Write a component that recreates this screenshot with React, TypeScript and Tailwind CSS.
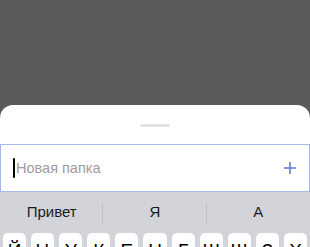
const keys = ["Й", "Ц", "У", "К", "Е", "Н", "Г", "Ш", "Щ", "З", "Х"];
const suggestions = ["Привет", "Я", "А"];

export default function App() {
  return (
    <div className="w-[310px] h-[247px] overflow-hidden bg-[#5b5b5b] flex flex-col font-['Liberation_Sans',Arial,sans-serif]">
      <div className="h-[105px] shrink-0" />
      <div className="flex-1 flex flex-col bg-white rounded-t-[13px]">
        {/* grabber */}
        <div className="flex justify-center pt-[19px] pb-[17px]">
          <div className="w-[30px] h-[3px] rounded-full bg-[#e3e3e6]" />
        </div>

        {/* input */}
        <div className="h-[48px] shrink-0 flex items-center border border-[#a9b7e4] pl-[12px] pr-[13px]">
          <div className="w-[2px] h-[20px] bg-black rounded-full" />
          <span className="ml-[1px] text-[14.5px] text-[#9d9da3] leading-none">Новая папка</span>
          <div className="flex-1" />
          <svg width="12" height="12" viewBox="0 0 12 12">
            <path d="M6 0v12M0 6h12" stroke="#5b75d5" strokeWidth="1.5" />
          </svg>
        </div>

        {/* keyboard */}
        <div className="flex-1 bg-[#d2d4da] flex flex-col">
          <div className="h-[41px] shrink-0 grid grid-cols-3 items-center">
            {suggestions.map((s, i) => (
              <div key={s} className="relative flex justify-center items-center h-full">
                <span className="text-[15px] text-[#1c1c1e]">{s}</span>
                {i < 2 && (
                  <div className="absolute right-0 top-[10px] bottom-[8px] w-px bg-[#bfc1c7]" />
                )}
              </div>
            ))}
          </div>
          <div className="flex gap-[5px] px-[3px]">
            {keys.map((k) => (
              <div
                key={k}
                className="flex-1 h-[36px] bg-white rounded-[5px] shadow-[0_1px_0_#898a8d] flex justify-center pt-[8px] text-[19px] text-black leading-none"
              >
                {k}
              </div>
            ))}
          </div>
        </div>
      </div>
    </div>
  );
}
